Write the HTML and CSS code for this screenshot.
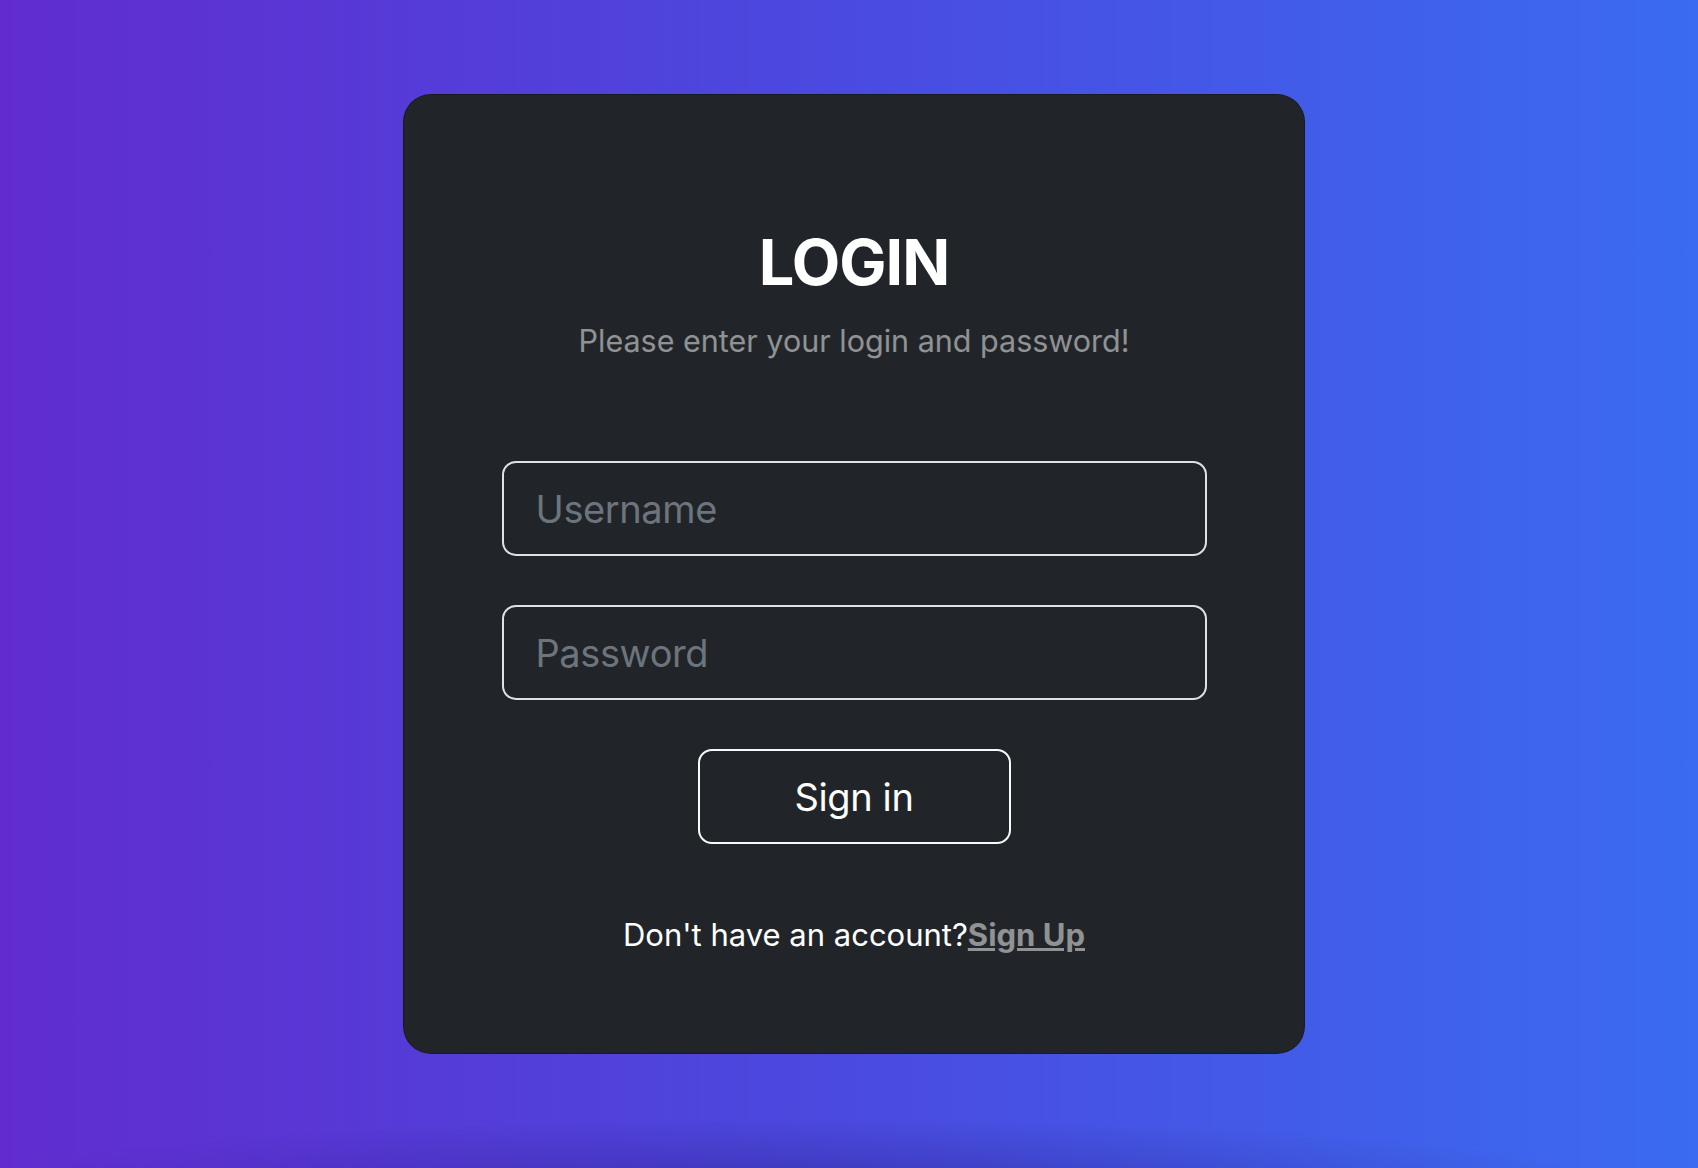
FILE: index.html
```html
<!DOCTYPE html>
<html lang="en">
<head>
  <meta charset="UTF-8">
  <title>Login</title>
  <link rel="stylesheet" href="styles.css">
</head>
<body>
  <section class="page">
    <div class="card">
      <h2 class="title">LOGIN</h2>
      <p class="subtitle">Please enter your login and password!</p>
      <form class="login-form" onsubmit="return false;">
        <input class="field" type="text" placeholder="Username" />
        <input class="field" type="password" placeholder="Password" />
        <button class="btn-signin" type="submit">Sign in</button>
      </form>
      <p class="signup">Don't have an account?<a href="#" class="signup-link">Sign Up</a></p>
    </div>
  </section>
</body>
</html>
```

FILE: styles.css
```css
    html, body {
      margin: 0;
      height: 100%;
      overflow: hidden;
    }

    body {
      font-family: Inter, "Noto Sans", "Liberation Sans", sans-serif;
      /* dark haze along the bottom edge, then the main gradient */
      background:
        radial-gradient(ellipse 820px 70px at 47% calc(100% + 20px), rgba(30,15,100,0.32), rgba(30,15,100,0) 100%),
        linear-gradient(to right, #612ccf, #4c47de 45%, #3a6bf0);
    }

    .page {
      display: flex;
      justify-content: center;
      padding-top: 94px;
      padding-left: 10px;
    }

    .card {
      width: 902px;
      height: 960px;
      box-sizing: border-box;
      background: #212529;
      border: 1px solid rgba(0,0,0,0.25);
      border-radius: 28px;
      display: flex;
      flex-direction: column;
      align-items: center;
      color: #fff;
    }

    .title {
      margin: 129px 0 0;
      font-size: 63px;
      line-height: 76px;
      font-weight: 700;
      letter-spacing: -1px;
    }

    .subtitle {
      margin: 18px 0 0;
      font-size: 30.5px;
      line-height: 46px;
      color: rgba(255,255,255,0.5);
    }

    .login-form {
      margin-top: 97px;
      display: flex;
      flex-direction: column;
      align-items: center;
      gap: 49px;
    }

    .field {
      width: 705px;
      height: 95px;
      box-sizing: border-box;
      padding: 0 32px;
      background: #212529;
      border: 2px solid #dee2e6;
      border-radius: 14px;
      color: #fff;
      font-family: inherit;
      font-size: 38px;
      letter-spacing: -0.4px;
      outline: none;
    }

    .field::placeholder {
      color: #6c757d;
    }

    .btn-signin {
      width: 313px;
      height: 95px;
      background: transparent;
      border: 2px solid #f8f9fa;
      border-radius: 14px;
      color: #fff;
      font-family: inherit;
      font-size: 38px;
      letter-spacing: -0.4px;
      cursor: pointer;
    }

    .signup {
      margin: 68px 0 0;
      font-size: 31px;
      line-height: 46px;
    }

    .signup-link {
      color: rgba(255,255,255,0.5);
      font-weight: 700;
      text-decoration: underline;
    }
```
